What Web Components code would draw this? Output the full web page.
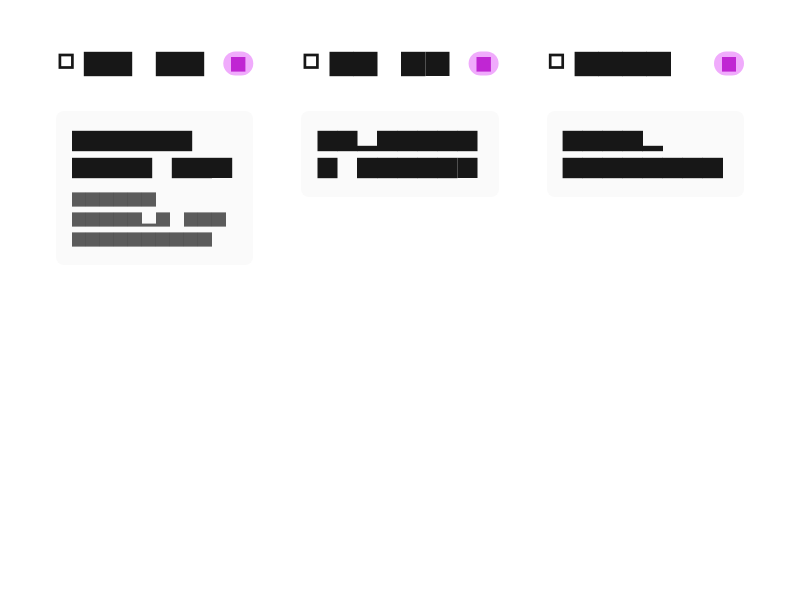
<!DOCTYPE html>
<html lang="en">
<head>
<meta charset="utf-8">
<title>Board</title>
<style>
body{margin:0;background:#fff;font-family:"Liberation Sans",sans-serif;color:#171717}
</style>
</head>
<body>
<column-board>
  <board-column icon-x="3.9" badge-x="0.3">
    <block-text slot="title" size="24" text="XX XX" lead="0.2"></block-text>
    <board-card>
      <block-text size="20" text="XXXXXX"></block-text>
      <block-text size="20" text="XXXX XXE"></block-text>
      <block-text slot="note" size="14" text="XXXXXX"></block-text>
      <block-text slot="note" size="14" text="XXXXXpX XXX"></block-text>
      <block-text slot="note" size="14" text="XXXXXXXXXX"></block-text>
    </board-card>
  </board-column>
  <board-column icon-x="3.9" badge-x="-0.4">
    <block-text slot="title" size="24" text="XX XE" shift="0.5"></block-text>
    <board-card>
      <block-text size="20" text="XXpXXXXX" shift="0.5"></block-text>
      <block-text size="20" text="X XXXXXE" shift="0.5"></block-text>
    </board-card>
  </board-column>
  <board-column icon-x="3.2" badge-x="0">
    <block-text slot="title" size="24" text="XXXX" shift="-0.4"></block-text>
    <board-card>
      <block-text size="20" text="XXXXp" shift="-0.4"></block-text>
      <block-text size="20" text="XXXXXXXX" shift="-0.4"></block-text>
    </board-card>
  </board-column>
</column-board>
<script>
// A run of solid em-square glyphs: X is a full block, p a descender, E a block flush with its baseline.
class BlockText extends HTMLElement {
  connectedCallback() {
    const size = +this.getAttribute('size');
    const text = this.getAttribute('text');
    const shift = +(this.getAttribute('shift') || 0);
    const lead = +(this.getAttribute('lead') || 0);
    const small = size < 16;
    const vy = small ? 0.6 : 0.2;
    let shapes = '';
    [...text].forEach((c, i) => {
      if (c === ' ') return;
      const prev = text[i - 1];
      const next = text[i + 1];
      const isolated = prev === ' ' || prev === 'p';
      let start = i * size + shift;
      let end = (i + 1) * size + shift;
      if (small) {
        if (i && !isolated && c !== 'p') start -= 0.1;
      } else {
        if (i === 0) start -= lead;
        else if (isolated) start = i * size - (shift ? 0 : prev === ' ' ? 0.2 : 0);
        else if (!(c === 'E' && shift > 0)) start = i * size + (shift < 0 ? -1 : 0);
        if (shift === 0 && (!next || next === ' ')) end += 0.2;
        if (shift < 0 && (!next || next === 'p')) end = (i + 1) * size;
        if (c === 'p' && next) end = (i + 1) * size;
      }
      const inner = small ? size - 1 : size;
      const top = c === 'p' ? (small ? 10.6 : size * 0.75 - 0.2) : -vy;
      const bottom = inner + (c === 'E' ? 0 : vy);
      shapes += `<rect x="${start}" y="${top}" width="${end - start}" height="${bottom - top}"/>`;
    });
    this.attachShadow({mode: 'open'}).innerHTML = `
      <style>:host{display:block;line-height:0}svg{display:block;overflow:visible}</style>
      <svg width="${size * text.length}" height="${size}" fill="${small ? 'rgba(23,23,23,.7)' : '#171717'}">${shapes}</svg>`;
  }
}
customElements.define('block-text', BlockText);

class ColumnBoard extends HTMLElement {
  constructor() {
    super();
    this.attachShadow({mode: 'open'}).innerHTML = `
      <style>:host{display:grid;grid-template-columns:repeat(3,1fr);gap:48px;padding:48px 56px;align-items:start}</style>
      <slot></slot>`;
  }
}
customElements.define('column-board', ColumnBoard);

class CountBadge extends HTMLElement {
  connectedCallback() {
    const x = +(this.getAttribute('x') || 0);
    this.attachShadow({mode: 'open'}).innerHTML = `
      <style>:host{display:block;flex:none}svg{display:block;overflow:visible}</style>
      <svg width="30" height="25">
        <rect x="${x}" y="0.4" width="30" height="24.2" rx="12" fill="#f0abfc"/>
        <rect x="${x < 0 ? 7.5 : 8}" y="6" width="${x ? 14.4 : 14}" height="14.6" fill="#c026d3"/>
      </svg>`;
  }
}
customElements.define('count-badge', CountBadge);

class BoardColumn extends HTMLElement {
  connectedCallback() {
    this.attachShadow({mode: 'open'}).innerHTML = `
      <style>
        :host{display:block;min-width:0}
        header{display:flex;align-items:flex-start;height:31px;margin-bottom:32px}
        .icon{display:block;width:20px;height:24px;margin-right:8px;flex:none}
        slot[name=title]{display:block;padding-top:4px;flex:1}
        count-badge{margin-top:3px}
      </style>
      <header>
        <svg class="icon" viewBox="0 0 20 24"><rect x="${this.getAttribute('icon-x')}" y="7" width="12.5" height="12.5" fill="none" stroke="#171717" stroke-width="2.7"/></svg>
        <slot name="title"></slot>
        <count-badge x="${this.getAttribute('badge-x')}"></count-badge>
      </header>
      <slot></slot>`;
  }
}
customElements.define('board-column', BoardColumn);

class BoardCard extends HTMLElement {
  constructor() {
    super();
    this.attachShadow({mode: 'open'}).innerHTML = `
      <style>
        :host{display:block;padding:20px 16px 18px;border-radius:8px;background:#fafafa}
        .body{display:grid;gap:7px}
        .notes{display:grid;gap:6px;margin-top:1px}
        .notes.filled{margin-top:15px}
      </style>
      <div class="body"><slot></slot></div>
      <div class="notes"><slot name="note"></slot></div>`;
    if (this.querySelector('[slot=note]')) this.shadowRoot.querySelector('.notes').classList.add('filled');
  }
}
customElements.define('board-card', BoardCard);
</script>
</body>
</html>
